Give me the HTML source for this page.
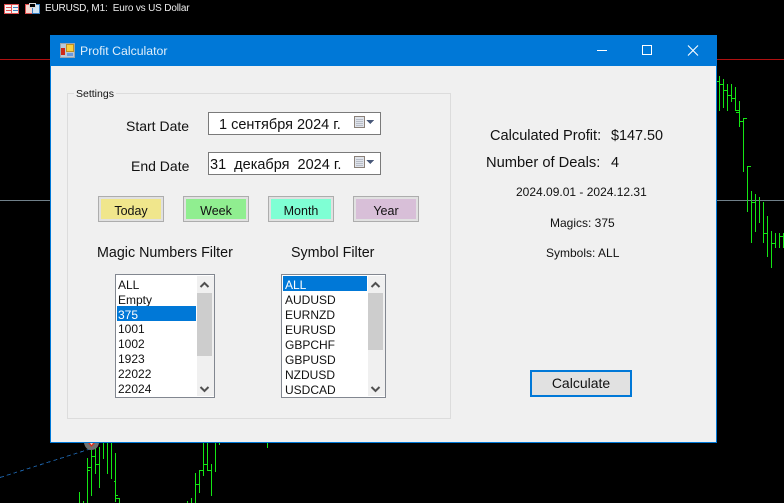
<!DOCTYPE html>
<html><head><meta charset="utf-8">
<style>
html,body{margin:0;padding:0;background:#000;}
#r{position:relative;width:784px;height:503px;overflow:hidden;background:#000;font-family:"Liberation Sans",sans-serif;color:#000;}
#r>svg{position:absolute;left:0;top:0;}
.a{position:absolute;white-space:nowrap;}
#win{position:absolute;left:50px;top:35px;width:665px;height:406px;border:1px solid #0078d7;background:#f0f0f0;}
#tb{position:absolute;left:0;top:0;width:665px;height:30px;background:#0078d7;}
.l14{font-size:14px;line-height:16px;color:#111;}
.l12{font-size:12px;line-height:14px;color:#111;}
.dp{position:absolute;box-sizing:border-box;left:208px;width:173px;height:23px;background:#fff;border:1px solid #7a7a7a;font-size:14.500px;line-height:25px;color:#111;white-space:pre;}
.btn{position:absolute;box-sizing:border-box;top:196px;width:66px;height:26px;border:1px solid #adadad;font-size:12.500px;text-align:center;line-height:29px;color:#111;}
.btn i{position:absolute;left:2px;top:2px;width:60px;height:20px;display:block;}
.btn span{position:relative;}
.lb{position:absolute;box-sizing:border-box;top:274px;height:124px;background:#fff;border:1px solid #828790;overflow:hidden;}
.it{position:absolute;left:1px;height:15px;font-size:12px;line-height:15px;padding-left:1px;color:#111;white-space:nowrap;}
.rt{padding-left:2px;}
.sel{background:#0078d7;color:#fff;}
.sb{position:absolute;top:1px;width:17px;height:120px;background:#f0f0f0;}
.th{position:absolute;left:0;width:15px;background:#cdcdcd;}
.sb svg{position:absolute;left:0;}
</style></head><body>
<div id="r">
<svg width="784" height="503" shape-rendering="crispEdges">
<rect x="0" y="59" width="784" height="1" fill="#b01010"/>
<rect x="0" y="200" width="784" height="1" fill="#70808a"/>
<g fill="#14e614">
<path d="M719 76h1v35h-1zM723 79h1v29h-1zM727 84h1v27h-1zM731 84h1v18h-1zM735 87h1v24h-1zM739 101h1v26h-1zM743 118h1v54h-1zM747 166h1v46h-1zM751 191h1v52h-1zM755 194h1v38h-1zM759 197h1v26h-1zM763 202h1v41h-1zM767 216h1v41h-1zM771 231h1v37h-1zM775 233h1v15h-1zM779 233h1v15h-1zM783 233h1v15h-1z"/>
<path d="M717 81h2v1h-2zM720 84h3v1h-3zM724 90h3v1h-3zM728 95h3v1h-3zM732 98h3v1h-3zM735 95h1v1h-1zM736 110h3v1h-3zM736 112h3v1h-3zM740 121h3v1h-3zM744 118h3v1h-3zM743 170h1v1h-1zM748 166h3v1h-3zM747 205h1v1h-1zM752 202h3v1h-3zM751 205h1v1h-1zM755 222h1v1h-1zM759 219h1v1h-1zM764 233h3v1h-3zM767 253h1v1h-1zM771 256h1v1h-1zM772 243h3v1h-3zM775 242h1v1h-1zM779 242h1v1h-1zM780 236h3v1h-3z"/>
<path d="M79 492h1v11h-1zM83 501h1v2h-1zM87 458h1v45h-1zM91 450h1v46h-1zM95 443h1v31h-1zM99 447h1v41h-1zM103 443h1v16h-1zM107 443h1v31h-1zM111 443h1v36h-1zM115 453h1v49h-1zM119 498h1v5h-1z"/>
<path d="M88 470h2v1h-2zM88 467h3v1h-3zM92 456h3v1h-3zM95 461h1v1h-1zM96 464h3v1h-3zM99 456h1v1h-1zM103 453h1v1h-1zM107 453h1v1h-1zM111 475h1v1h-1zM111 456h1v1h-1zM114 481h1v1h-1zM116 495h2v1h-2zM116 498h3v1h-3z"/>
<path d="M187 501h1v2h-1zM191 498h1v5h-1zM195 473h1v30h-1zM199 470h1v23h-1zM203 443h1v33h-1zM207 443h1v28h-1zM211 464h1v32h-1zM215 443h1v28h-1zM219 443h1v2h-1zM267 443h1v5h-1z"/>
<path d="M195 481h1v1h-1zM196 484h3v1h-3zM199 484h1v1h-1zM200 470h3v1h-3zM204 464h3v1h-3zM207 464h1v1h-1zM208 470h3v1h-3zM211 473h1v1h-1zM211 467h1v1h-1zM215 471h1v1h-1z"/>
</g>
<line x1="0" y1="477.500" x2="90" y2="449" stroke="#1a5a9a" stroke-width="1" stroke-dasharray="4 3"/>
</svg>
<svg width="784" height="503">
<path d="M84 443H99C98 448 95 450 91 450C88 450 85 448 84 443Z" fill="#707070"/>
<path d="M88 443H95L91.500 447Z" fill="#d83020"/>
<path d="M90 443H93L91.500 445Z" fill="#f0e0d0"/>
<g fill="none" stroke-width="1" shape-rendering="crispEdges">
<rect x="4.500" y="4.500" width="14" height="9" fill="#f4f4f4" stroke="#e05050"/>
<path d="M6 7.500H11M6 10.500H11" stroke="#e05050"/>
<path d="M11.500 5V13" stroke="#e05050"/>
<path d="M13 7.500H18M13 10.500H18" stroke="#3a80c0"/>
<path d="M25.500 4.500H32.500V13.500H25.500Z" fill="#f8d8d0" stroke="#e05050"/>
<path d="M32.500 4.500H39.500V13.500H32.500Z" fill="#d0e4f4" stroke="#3a80c0"/>
<rect x="29.500" y="3.500" width="6" height="4" fill="#000" stroke="#d8d8d8"/>
</g>
</svg>
<div class="a" style="left:45px;top:2px;font-size:10px;letter-spacing:-.17px;line-height:14px;color:#eee;white-space:pre;">EURUSD, M1:  Euro vs US Dollar</div>

<div id="win">
<div id="tb">
<svg style="position:absolute;left:9px;top:7px" width="16" height="16" shape-rendering="crispEdges">
<rect x="0.500" y="0.500" width="14" height="14" fill="#b8c8d8" stroke="#9aa4ae"/>
<rect x="6.500" y="1.500" width="7" height="7" fill="#f8d040" stroke="#c09020"/>
<rect x="1" y="5" width="4" height="7" fill="#d02818"/>
<rect x="7" y="10" width="6" height="3" fill="#6a9ae0"/>
</svg>
<div class="a" style="left:29px;top:8px;font-size:12.300px;line-height:15px;color:#fff;opacity:.88;">Profit Calculator</div>
<svg style="position:absolute;left:540px;top:0" width="125" height="30">
<path d="M6 14.500H16" stroke="#fff" stroke-width="1" shape-rendering="crispEdges"/>
<rect x="51.500" y="9.500" width="9" height="9" fill="none" stroke="#fff" shape-rendering="crispEdges"/>
<path d="M97 9.500L107 19.500M107 9.500L97 19.500" stroke="#fff" stroke-width="1.100" fill="none"/>
</svg>
</div>
</div>

<div class="a" style="left:67px;top:93px;width:382px;height:324px;border:1px solid #dcdcdc;"></div>
<div class="a l12" style="left:74px;top:87px;background:#f0f0f0;padding:0 2px;font-size:10.500px;">Settings</div>
<div class="a l14" style="left:126px;top:118px;">Start Date</div>
<div class="a l14" style="left:131px;top:158px;">End Date</div>

<div class="dp" style="top:112px;padding-left:10px;">1 сентября 2024 г.</div>
<div class="dp" style="top:152px;padding-left:1px;">31  декабря  2024 г.</div>
<svg class="a" style="left:353px;top:115px" width="24" height="16" shape-rendering="crispEdges">
<rect x="1.500" y="1.500" width="10" height="11" fill="#dfe3ea" stroke="#8a8078"/>
<path d="M3 4.500H10M3 6.500H10M3 8.500H10M3 10.500H10" stroke="#b8bcc6"/>
<path d="M13 5H21L17 9Z" fill="#4a5a7a"/>
</svg>
<svg class="a" style="left:353px;top:155px" width="24" height="16" shape-rendering="crispEdges">
<rect x="1.500" y="1.500" width="10" height="11" fill="#dfe3ea" stroke="#8a8078"/>
<path d="M3 4.500H10M3 6.500H10M3 8.500H10M3 10.500H10" stroke="#b8bcc6"/>
<path d="M13 5H21L17 9Z" fill="#4a5a7a"/>
</svg>

<div class="btn" style="left:98px;background:#e1e1e1;"><i style="background:#f0e68c"></i><span>Today</span></div>
<div class="btn" style="left:183px;background:#e1e1e1;"><i style="background:#90ee90"></i><span>Week</span></div>
<div class="btn" style="left:268px;background:#e1e1e1;"><i style="background:#7fffd4"></i><span>Month</span></div>
<div class="btn" style="left:353px;background:#e1e1e1;"><i style="background:#d8bfd8"></i><span>Year</span></div>

<div class="a l14" style="left:97px;top:245px;font-size:14.300px;">Magic Numbers Filter</div>
<div class="a l14" style="left:291px;top:245px;font-size:14.300px;">Symbol Filter</div>

<div class="lb" style="left:115px;width:100px;">
<div class="it" style="top:3px;width:78px;">ALL</div>
<div class="it" style="top:18px;width:78px;">Empty</div>
<div class="it sel" style="top:31px;width:78px;line-height:19px;">375</div>
<div class="it" style="top:47px;width:78px;">1001</div>
<div class="it" style="top:62px;width:78px;">1002</div>
<div class="it" style="top:77px;width:78px;">1923</div>
<div class="it" style="top:92px;width:78px;">22022</div>
<div class="it" style="top:107px;width:78px;">22024</div>
<div class="sb" style="left:81px;">
<svg style="top:3px" width="15" height="12"><path d="M3.500 8L7.500 4L11.500 8" fill="none" stroke="#505050" stroke-width="2"/></svg>
<div class="th" style="top:17px;height:63px;"></div>
<svg style="top:107px" width="15" height="12"><path d="M3.500 4L7.500 8L11.500 4" fill="none" stroke="#505050" stroke-width="2"/></svg>
</div>
</div>

<div class="lb" style="left:281px;width:105px;">
<div class="it sel rt" style="top:1px;width:82px;line-height:19px;">ALL</div>
<div class="it rt" style="top:18px;width:82px;">AUDUSD</div>
<div class="it rt" style="top:33px;width:82px;">EURNZD</div>
<div class="it rt" style="top:48px;width:82px;">EURUSD</div>
<div class="it rt" style="top:63px;width:82px;">GBPCHF</div>
<div class="it rt" style="top:78px;width:82px;">GBPUSD</div>
<div class="it rt" style="top:93px;width:82px;">NZDUSD</div>
<div class="it rt" style="top:108px;width:82px;">USDCAD</div>
<div class="sb" style="left:86px;">
<svg style="top:3px" width="15" height="12"><path d="M3.500 8L7.500 4L11.500 8" fill="none" stroke="#505050" stroke-width="2"/></svg>
<div class="th" style="top:17px;height:57px;"></div>
<svg style="top:107px" width="15" height="12"><path d="M3.500 4L7.500 8L11.500 4" fill="none" stroke="#505050" stroke-width="2"/></svg>
</div>
</div>

<div class="a l14" style="left:490px;top:128px;font-size:14.600px;">Calculated Profit:</div>
<div class="a l14" style="left:611px;top:128px;font-size:14.400px;">$147.50</div>
<div class="a l14" style="left:486px;top:155px;font-size:14.700px;">Number of Deals:</div>
<div class="a l14" style="left:611px;top:155px;font-size:14.400px;">4</div>
<div class="a l12" style="left:516px;top:185px;">2024.09.01 - 2024.12.31</div>
<div class="a l12" style="left:550px;top:216px;">Magics: 375</div>
<div class="a l12" style="left:546px;top:246px;">Symbols: ALL</div>

<div class="a" style="box-sizing:border-box;left:530px;top:370px;width:102px;height:27px;border:2px solid #0078d7;background:#e1e1e1;font-size:14px;line-height:23px;text-align:center;color:#111;">Calculate</div>
</div>
</body></html>
